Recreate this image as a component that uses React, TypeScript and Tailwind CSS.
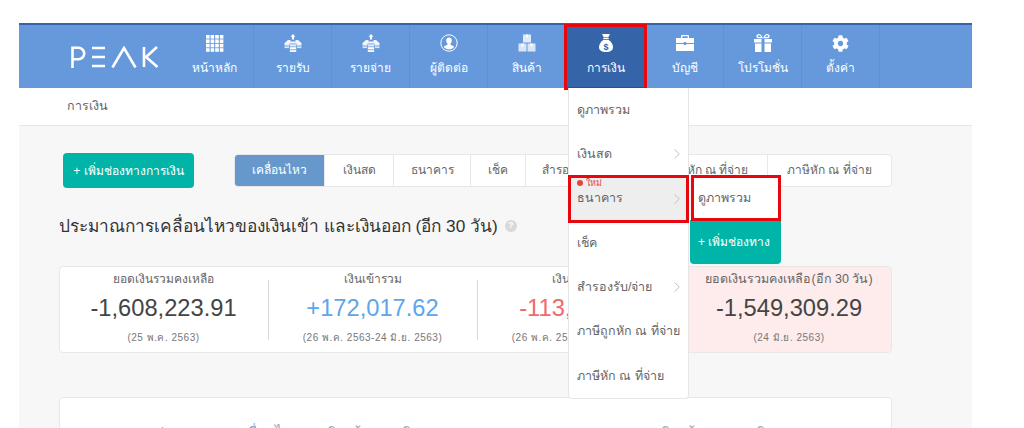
import { ChevronRight } from "lucide-react";
import { FaCog } from "react-icons/fa";

const GridIcon = () => (
    <svg width="18" height="17" viewBox="0 0 18 17" fill="currentColor">
        {[0, 4.6, 9.2, 13.8].map(x =>
            [0, 4.4, 8.8, 13.2].map(y => <rect key={`${x}-${y}`} x={x} y={y} width="3.6" height="3.6" />)
        )}
    </svg>
);

const TrayIcon = () => (
    <svg width="18" height="18" viewBox="0 0 18 18" fill="currentColor">
        <path d="M9 0l2.400 2.800H10.100V5.500H7.900V2.800H6.600z" />
        <path d="M4 6h2.500v1.500h5V6H14l3.500 3v2.500h-5V9.500h-7v2H.5V9z" opacity=".9" />
        <rect x=".5" y="12.300" width="4.500" height="1.800" opacity=".75" />
        <rect x="13" y="12.300" width="4.500" height="1.800" opacity=".75" />
        <rect x="5.800" y="10.300" width="6.400" height="2.200" opacity=".8" />
        <rect x="5.800" y="13.200" width="6.400" height="2.200" />
        <rect x="5.800" y="16" width="6.400" height="2" opacity=".85" />
    </svg>
);

const UserCircleIcon = () => (
    <svg width="18" height="18" viewBox="0 0 18 18" fill="currentColor">
        <circle cx="9" cy="9" r="8.200" fill="none" stroke="currentColor" strokeWidth="1" />
        <path d="M9 3.500c-1.800 0-2.800 1.300-2.800 3 0 1.200.5 2.300 1.300 3v1.200c-1.500.6-3.200 1.200-3.800 2.300a7 7 0 0 0 10.600 0c-.6-1.100-2.300-1.700-3.800-2.300V9.500c.8-.7 1.300-1.800 1.300-3 0-1.700-1-3-2.800-3z" />
    </svg>
);

const BoxesIcon = () => (
    <svg width="18" height="18" viewBox="0 0 18 18" fill="currentColor">
        <rect x="5" y=".5" width="8" height="8" opacity=".8" />
        <rect x=".5" y="9.500" width="8" height="8" opacity=".75" />
        <rect x="9.500" y="9.500" width="8" height="8" opacity=".75" />
        <rect x="8" y=".5" width="2" height="3" />
        <rect x="3.500" y="9.500" width="2" height="3" />
        <rect x="12.500" y="9.500" width="2" height="3" />
    </svg>
);

const MoneyBagIcon = () => (
    <svg width="14" height="18" viewBox="0 0 14 18" fill="white">
        <path d="M3 0h8L9.300 3.200H4.700z" />
        <rect x="4.300" y="3.800" width="5.400" height="1.200" />
        <path d="M4.500 5.700h5C12 7.500 14 10.300 14 13c0 3.300-2.500 5-7 5s-7-1.700-7-5c0-2.700 2-5.500 4.500-7.300z" />
        <text x="7" y="15.500" textAnchor="middle" fontSize="9" fontWeight="700" fill="#3564a8">$</text>
    </svg>
);

const BriefcaseIcon = () => (
    <svg width="18" height="16" viewBox="0 0 18 16" fill="currentColor">
        <path d="M6 0h6a1 1 0 0 1 1 1v2h-1.300V1.300H6.300V3H5V1a1 1 0 0 1 1-1z" />
        <path d="M0 3h18v5H10.200V7H7.800v1H0z" />
        <path d="M0 9h7.800v1h2.400V9H18v7H0z" />
    </svg>
);

const GiftIcon = () => (
    <svg width="18" height="18" viewBox="0 0 18 18" fill="currentColor">
        <path d="M9 4.300C7.800 1.500 6.400 0 4.800 0 3.300 0 2.400 1 2.400 2.200c0 1.300 1 2.100 2.400 2.100zm0 0c1.200-2.800 2.600-4.300 4.200-4.300 1.500 0 2.400 1 2.400 2.200 0 1.300-1 2.100-2.400 2.100zM4.800 3c-.7 0-1-.3-1-.8s.4-.9 1-.9c.8 0 1.500.6 2.200 1.700zm8.400 0H11c.7-1.100 1.400-1.700 2.200-1.700.6 0 1 .4 1 .9s-.3.8-1 .8z" fillRule="evenodd" />
        <rect x="0" y="5" width="7.500" height="3.500" />
        <rect x="10.500" y="5" width="7.500" height="3.500" />
        <rect x="1" y="9.500" width="6.500" height="8.500" />
        <rect x="10.500" y="9.500" width="6.500" height="8.500" />
    </svg>
);

const PeakLogo = () => (
    <svg width="88" height="22" viewBox="0 0 88 22" fill="none" stroke="white" strokeWidth="2.600">
        <path d="M1.500 22V1.800h6a5.700 5.700 0 0 1 0 11.400h-6" />
        <path d="M21 2h13M21 11h13M21 20h13" />
        <path d="M41.500 21.500L53 2l11.500 19.500" />
        <path d="M73 1v20M86 1L75 11l11.500 10" />
    </svg>
);

const navItems = [
    { label: "หน้าหลัก", icon: <GridIcon /> },
    { label: "รายรับ", icon: <TrayIcon /> },
    { label: "รายจ่าย", icon: <TrayIcon /> },
    { label: "ผู้ติดต่อ", icon: <UserCircleIcon /> },
    { label: "สินค้า", icon: <BoxesIcon /> },
    { label: "การเงิน", icon: <MoneyBagIcon />, active: true },
    { label: "บัญชี", icon: <BriefcaseIcon /> },
    { label: "โปรโมชั่น", icon: <GiftIcon /> },
    { label: "ตั้งค่า", icon: <FaCog size={17} /> },
];

const tabs = [
    { label: "เคลื่อนไหว", width: "w-[90px]", active: true },
    { label: "เงินสด", width: "w-[69px]" },
    { label: "ธนาคาร", width: "w-[77px]" },
    { label: "เช็ค", width: "w-[55px]" },
    { label: "สำรองรับ/จ่าย", width: "w-[105px]" },
    { label: "ภาษีถูกหัก ณ ที่จ่าย", width: "w-[137px]" },
    { label: "ภาษีหัก ณ ที่จ่าย", width: "w-[123px]" },
];

const stats = [
    { title: "ยอดเงินรวมคงเหลือ", value: "-1,608,223.91", color: "text-[#444]", date: "(25 พ.ค. 2563)" },
    { title: "เงินเข้ารวม", value: "+172,017.62", color: "text-[#5ea5ea]", date: "(26 พ.ค. 2563-24 มิ.ย. 2563)" },
    { title: "เงินออกรวม", value: "-113,086.00", color: "text-[#f0696b]", date: "(26 พ.ค. 2563-24 มิ.ย. 2563)" },
];

const menuItems = [
    { label: "ดูภาพรวม" },
    { label: "เงินสด", arrow: true },
    { label: "ธนาคาร", arrow: true, active: true },
    { label: "เช็ค" },
    { label: "สำรองรับ/จ่าย", arrow: true },
    { label: "ภาษีถูกหัก ณ ที่จ่าย" },
    { label: "ภาษีหัก ณ ที่จ่าย" },
];

const App = () => {
    return (
        <div className="h-[428px] w-[1024px] overflow-hidden bg-white pt-[23px] pl-[19px] font-['Liberation_Sans',sans-serif]">
            <div className="relative w-[953px]">
                {/* Header */}
                <div className="flex h-[65px] border-t-2 border-[#3564a8] bg-[#6698dc] text-white">
                    <div className="flex w-[157px] items-center pl-[52px]">
                        <PeakLogo />
                    </div>
                    {navItems.map(item => (
                        <div
                            key={item.label}
                            className={`relative flex flex-col items-center border-r border-[#5f90d3] pt-[8px] ${item.active ? "w-[80px] bg-[#3564a8]" : "w-[78px]"}`}
                        >
                            <div className="flex h-[20px] items-center">{item.icon}</div>
                            <span className="mt-[5px] text-[12px] leading-[20px]">{item.label}</span>
                            {item.active && (
                                <div className="absolute -top-[1px] -right-[2px] -bottom-[2px] -left-[2px] border-[3px] border-[#e8060f]" />
                            )}
                        </div>
                    ))}
                </div>

                {/* Breadcrumb */}
                <div className="flex h-[38px] items-center border-b border-[#e6e6e6] pl-[48px] text-[12.5px] text-[#666]">
                    การเงิน
                </div>

                {/* Content */}
                <div className="h-[310px] bg-[#f7f7f7] pt-[27px] pr-[80px] pl-[40px]">
                    <div className="flex items-center">
                        <button className="ml-[4px] h-[35px] w-[131px] rounded-[4px] bg-[#00b5a8] text-[12px] text-white">
                            + เพิ่มช่องทางการเงิน
                        </button>
                        <div className="ml-[40px] flex h-[33px] overflow-hidden rounded-[4px] border border-[#e8e8e8] bg-white text-[12px] text-[#666]">
                            {tabs.map(tab => (
                                <div
                                    key={tab.label}
                                    className={`flex shrink-0 items-center justify-center border-r border-[#e8e8e8] pb-[1px] last:border-r-0 ${tab.width} ${tab.active ? "bg-[#6698cc] text-white" : ""}`}
                                >
                                    {tab.label}
                                </div>
                            ))}
                        </div>
                    </div>

                    <div className="mt-[26px] flex items-center gap-[7px]">
                        <h2 className="text-[17.250px] leading-[24px] font-medium whitespace-nowrap text-[#333]">
                            ประมาณการเคลื่อนไหวของเงินเข้า และเงินออก (อีก 30 วัน)
                        </h2>
                        <span className="flex h-[12px] w-[12px] items-center justify-center rounded-full bg-[#d9d9d9] text-[9px] font-bold text-white">
                            ?
                        </span>
                    </div>

                    {/* Stats */}
                    <div className="mt-[28px] flex h-[87px] overflow-hidden rounded-[4px] border border-[#e8e8e8] bg-white">
                        {stats.map(stat => (
                            <div key={stat.title} className="relative flex w-[209px] flex-col items-center pt-[3px] pr-[2px]">
                                <span className="text-[12px] leading-[18px] text-[#666]">{stat.title}</span>
                                <span className={`mt-[5px] text-[23.700px] leading-[30px] whitespace-nowrap ${stat.color}`}>{stat.value}</span>
                                <span className="mt-[7px] text-[10px] leading-[16px] tracking-[0.5px] whitespace-nowrap text-[#777]">{stat.date}</span>
                                <div className="absolute top-[13px] right-0 bottom-[12px] w-px bg-[#d8d8d8]" />
                            </div>
                        ))}
                        <div className="flex flex-1 flex-col items-center bg-[#fdeceb] pt-[3px]">
                            <span className="text-[12.500px] leading-[18px] whitespace-nowrap text-[#666]">ยอดเงินรวมคงเหลือ(อีก 30 วัน)</span>
                            <span className="mt-[5px] text-[23.700px] leading-[30px] text-[#444]">-1,549,309.29</span>
                            <span className="mt-[7px] text-[10px] leading-[16px] tracking-[0.5px] text-[#777]">(24 มิ.ย. 2563)</span>
                        </div>
                    </div>

                    {/* Chart card */}
                    <div className="mt-[44px] flex h-[120px] justify-between rounded-[4px] border border-[#e8e8e8] bg-white pt-[24px] pr-[92px] pl-[95px] text-[14px] text-[#8aa8cc]">
                        <span>ประมาณการเคลื่อนไหวของเงินเข้า และเงินออก</span>
                        <div className="flex items-center gap-[36px] self-start">
                            <span className="flex items-center gap-[6px]">
                                <span className="h-[8px] w-[8px] rounded-full bg-[#5ea5ea]" />เงินเข้า
                            </span>
                            <span className="flex items-center gap-[6px]">
                                <span className="h-[8px] w-[8px] rounded-full bg-[#f0696b]" />เงินออก
                            </span>
                        </div>
                    </div>
                </div>

                {/* Dropdown */}
                <div className="absolute top-[65px] left-[549px] w-[121px] rounded-b-[4px] border border-t-0 border-[#e6e6e6] bg-white text-[12.500px] text-[#666]">
                    {menuItems.map(item => (
                        <div
                            key={item.label}
                            className={`relative flex h-[44.3px] items-center justify-between pr-[2px] pl-[8px] whitespace-nowrap ${item.active ? "bg-[#eeeeee]" : ""}`}
                        >
                            {item.label}
                            {item.arrow && <ChevronRight size={18} strokeWidth={1.2} className="text-[#bbb]" />}
                            {item.active && (
                                <>
                                    <span className="absolute top-[1px] left-[8px] flex items-center gap-[3px] text-[9px] leading-[10px] text-[#e8433f]">
                                        <span className="h-[6px] w-[6px] rounded-full bg-[#e8433f]" />ใหม่
                                    </span>
                                    <div className="absolute -top-[2px] -right-[1px] -bottom-[2px] -left-[1px] border-[3px] border-[#e8060f]" />
                                </>
                            )}
                        </div>
                    ))}
                </div>

                {/* Submenu */}
                <div className="absolute top-[153px] left-[671px] w-[91px] text-[12.500px] text-[#666]">
                    <div className="relative flex h-[44px] items-center bg-white pl-[8px]">
                        ดูภาพรวม
                        <div className="absolute -top-[1px] right-0 -bottom-[1px] left-[1px] border-[3px] border-[#e8060f]" />
                    </div>
                    <div className="flex h-[44px] items-center rounded-b-[4px] bg-[#00b5a8] pl-[8px] text-[12px] whitespace-nowrap text-white">
                        + เพิ่มช่องทาง
                    </div>
                </div>
            </div>
        </div>
    );
};

export default App;
